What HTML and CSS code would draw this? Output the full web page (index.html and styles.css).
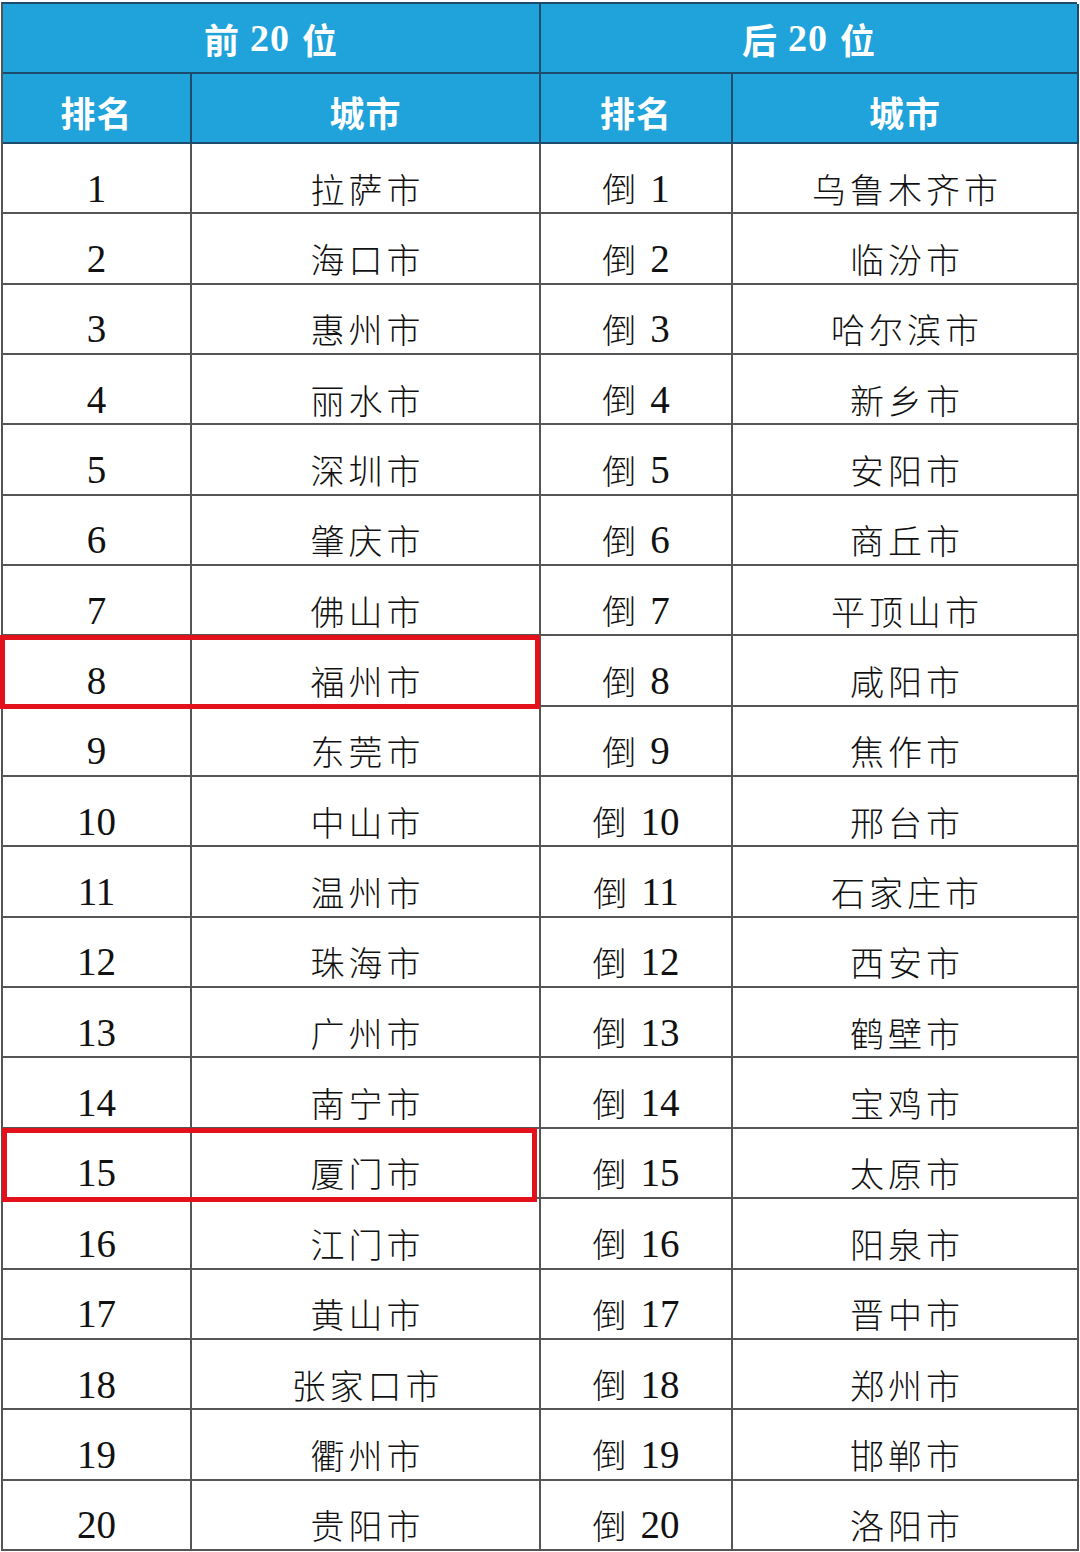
FILE: index.html
```html
<!DOCTYPE html>
<html lang="zh-CN">
<head>
<meta charset="utf-8">
<title>城市排名</title>
<link rel="stylesheet" href="styles.css">
</head>
<body>
<div class="wrap">
  <div class="sheet">
    <div class="hd hd-top span2">前<b class="num">20</b>位</div>
    <div class="hd hd-top span2 last">后<b class="num">20</b>位</div>
    <div class="hd hd-sub">排名</div>
    <div class="hd hd-sub">城市</div>
    <div class="hd hd-sub">排名</div>
    <div class="hd hd-sub last">城市</div>

    <div class="c"><span class="d">1</span></div><div class="c city">拉萨市</div><div class="c"><span class="dao">倒</span><span class="d">1</span></div><div class="c city last">乌鲁木齐市</div>
    <div class="c"><span class="d">2</span></div><div class="c city">海口市</div><div class="c"><span class="dao">倒</span><span class="d">2</span></div><div class="c city last">临汾市</div>
    <div class="c"><span class="d">3</span></div><div class="c city">惠州市</div><div class="c"><span class="dao">倒</span><span class="d">3</span></div><div class="c city last">哈尔滨市</div>
    <div class="c"><span class="d">4</span></div><div class="c city">丽水市</div><div class="c"><span class="dao">倒</span><span class="d">4</span></div><div class="c city last">新乡市</div>
    <div class="c"><span class="d">5</span></div><div class="c city">深圳市</div><div class="c"><span class="dao">倒</span><span class="d">5</span></div><div class="c city last">安阳市</div>
    <div class="c"><span class="d">6</span></div><div class="c city">肇庆市</div><div class="c"><span class="dao">倒</span><span class="d">6</span></div><div class="c city last">商丘市</div>
    <div class="c"><span class="d">7</span></div><div class="c city">佛山市</div><div class="c"><span class="dao">倒</span><span class="d">7</span></div><div class="c city last">平顶山市</div>
    <div class="c"><span class="d">8</span></div><div class="c city">福州市</div><div class="c"><span class="dao">倒</span><span class="d">8</span></div><div class="c city last">咸阳市</div>
    <div class="c"><span class="d">9</span></div><div class="c city">东莞市</div><div class="c"><span class="dao">倒</span><span class="d">9</span></div><div class="c city last">焦作市</div>
    <div class="c"><span class="d">10</span></div><div class="c city">中山市</div><div class="c"><span class="dao">倒</span><span class="d">10</span></div><div class="c city last">邢台市</div>
    <div class="c"><span class="d">11</span></div><div class="c city">温州市</div><div class="c"><span class="dao">倒</span><span class="d">11</span></div><div class="c city last">石家庄市</div>
    <div class="c"><span class="d">12</span></div><div class="c city">珠海市</div><div class="c"><span class="dao">倒</span><span class="d">12</span></div><div class="c city last">西安市</div>
    <div class="c"><span class="d">13</span></div><div class="c city">广州市</div><div class="c"><span class="dao">倒</span><span class="d">13</span></div><div class="c city last">鹤壁市</div>
    <div class="c"><span class="d">14</span></div><div class="c city">南宁市</div><div class="c"><span class="dao">倒</span><span class="d">14</span></div><div class="c city last">宝鸡市</div>
    <div class="c"><span class="d">15</span></div><div class="c city">厦门市</div><div class="c"><span class="dao">倒</span><span class="d">15</span></div><div class="c city last">太原市</div>
    <div class="c"><span class="d">16</span></div><div class="c city">江门市</div><div class="c"><span class="dao">倒</span><span class="d">16</span></div><div class="c city last">阳泉市</div>
    <div class="c"><span class="d">17</span></div><div class="c city">黄山市</div><div class="c"><span class="dao">倒</span><span class="d">17</span></div><div class="c city last">晋中市</div>
    <div class="c"><span class="d">18</span></div><div class="c city">张家口市</div><div class="c"><span class="dao">倒</span><span class="d">18</span></div><div class="c city last">郑州市</div>
    <div class="c"><span class="d">19</span></div><div class="c city">衢州市</div><div class="c"><span class="dao">倒</span><span class="d">19</span></div><div class="c city last">邯郸市</div>
    <div class="c"><span class="d">20</span></div><div class="c city">贵阳市</div><div class="c"><span class="dao">倒</span><span class="d">20</span></div><div class="c city last">洛阳市</div>
  </div>
  <div class="mark mark-a"></div>
  <div class="mark mark-b"></div>
</div>
</body>
</html>
```
FILE: styles.css
```css
* { box-sizing: border-box; }
html, body { margin: 0; padding: 0; background: #fff; }
.wrap {
  position: relative;
  width: 1080px;
  height: 1552px;
  padding: 2px 0 0 1px;
}
.sheet {
  display: grid;
  grid-template-columns: 189px 349px 192px 346px;
  grid-template-rows: 70px 70px repeat(20, 70.35px);
  width: 1076px;
  border-left: 2px solid #555;
  border-top: 2px solid #1d4b6c;
}
.hd {
  background: #20a2db;
  color: #fff;
  display: flex;
  align-items: center;
  justify-content: center;
  border-right: 2px solid #1d4b6c;
  border-bottom: 2px solid #1d4b6c;
  font-family: "Noto Sans CJK SC", sans-serif;
  font-weight: 700;
  font-size: 35px;
}
.hd .num {
  font-family: "Liberation Serif", serif;
  font-weight: 700;
  font-size: 38px;
  margin: 0 12px 0 10px;
}
.span2 { grid-column: span 2; }
.hd-top { padding-top: 0; letter-spacing: 1px; }
.hd-sub { padding-top: 6px; letter-spacing: 1px; }
.c {
  display: flex;
  align-items: center;
  justify-content: center;
  padding-top: 20px;
  border-right: 2px solid #555;
  border-bottom: 2px solid #555;
  color: #111;
}
.d {
  font-family: "Liberation Serif", serif;
  font-size: 39px;
  line-height: 1;
}
.dao {
  font-family: "Noto Sans CJK SC", sans-serif;
  font-weight: 300;
  font-size: 34px;
  line-height: 1;
  margin-right: 14px;
}
.city {
  font-family: "Noto Sans CJK SC", sans-serif;
  font-weight: 300;
  font-size: 34px;
  letter-spacing: 4px;
  padding-left: 4px;
}
.mark {
  position: absolute;
  border: 5px solid #e3111b;
}
.mark-a { left: 0; top: 635px; width: 540px; height: 74px; }
.mark-b { left: 2px; top: 1128px; width: 535px; height: 74px; }
```
